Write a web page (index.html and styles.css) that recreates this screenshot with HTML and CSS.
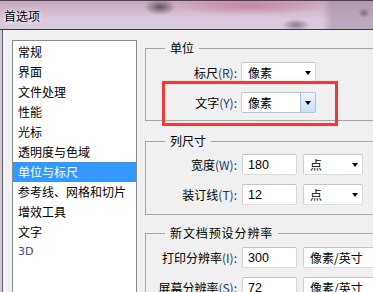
FILE: index.html
```html
<!DOCTYPE html>
<html lang="zh-CN">
<head>
<meta charset="utf-8">
<title>首选项</title>
<link rel="stylesheet" href="styles.css">
</head>
<body>
<div class="titlebar"><span class="title">首选项</span></div>
<div class="frame">
  <div class="client">
    <ul class="nav">
      <li>常规</li>
      <li>界面</li>
      <li>文件处理</li>
      <li>性能</li>
      <li>光标</li>
      <li>透明度与色域</li>
      <li class="sel">单位与标尺</li>
      <li>参考线、网格和切片</li>
      <li>增效工具</li>
      <li>文字</li>
      <li class="en">3D</li>
    </ul>
    <div class="panel">
      <fieldset class="grp g1">
        <legend>单位</legend>
        <div class="row">
          <label>标尺<span class="k">(R):</span></label>
          <div class="select"><span class="val">像素</span><i class="arrow"></i></div>
        </div>
        <div class="row">
          <label>文字<span class="k">(Y):</span></label>
          <div class="select focus"><span class="val">像素</span><span class="btn"><i class="arrow"></i></span></div>
        </div>
      </fieldset>
      <fieldset class="grp g2">
        <legend>列尺寸</legend>
        <div class="row">
          <label>宽度<span class="k">(W):</span></label>
          <div class="input num">180</div>
          <div class="select"><span class="val">点</span><i class="arrow"></i></div>
        </div>
        <div class="row">
          <label>装订线<span class="k">(T):</span></label>
          <div class="input num">12</div>
          <div class="select"><span class="val">点</span><i class="arrow"></i></div>
        </div>
      </fieldset>
      <fieldset class="grp g3">
        <legend>新文档预设分辨率</legend>
        <div class="row">
          <label>打印分辨率<span class="k">(I):</span></label>
          <div class="input num">300</div>
          <div class="select"><span class="val">像素/英寸</span></div>
        </div>
        <div class="row">
          <label>屏幕分辨率<span class="k">(S):</span></label>
          <div class="input num">72</div>
          <div class="select"><span class="val">像素/英寸</span></div>
        </div>
      </fieldset>
    </div>
  </div>
</div>
<div class="callout"></div>
</body>
</html>
```
FILE: styles.css
```css
html, body {
  margin: 0;
  padding: 0;
}
body {
  width: 373px;
  height: 292px;
  overflow: hidden;
  position: relative;
  background: #f0f0f0;
  font-family: "Noto Sans CJK SC", "Noto Sans", sans-serif;
  font-size: 12px;
  color: #000;
}

/* title bar (blurred aero glass) */
.titlebar {
  height: 28px;
  border-top: 1px solid #4a404a;
  border-bottom: 1px solid #3a3a3c;
  display: flex;
  align-items: center;
  padding-left: 4px;
  background:
    radial-gradient(ellipse 16px 8px at 160px 6px, rgba(70,60,72,.8), transparent),
    radial-gradient(ellipse 80px 9px at 250px 5px, rgba(196,112,142,.65), transparent),
    radial-gradient(ellipse 14px 6px at 296px 24px, rgba(100,86,102,.7), transparent),
    radial-gradient(ellipse 6px 5px at 364px 12px, rgba(90,80,92,.6), transparent),
    linear-gradient(to right, rgba(160,140,162,0) 0, rgba(160,140,162,0) 322px, rgba(160,140,162,.55) 332px),
    linear-gradient(#c7a7bc 0, #d3bccf 40%, #dacbdc 70%, #d9cadb 100%);
}
.title {
  font-size: 12px;
  line-height: 16px;
  margin-top: 1px;
  text-shadow: 0 0 5px rgba(255,255,255,.9), 0 0 2px rgba(255,255,255,.9);
}

/* window frame */
.frame {
  padding-left: 2px;
  background: #d6c7d6;
  height: 262px;
}
.client {
  height: 100%;
  border-left: 1px solid #5c5c60;
  background: #f0f0f0;
  display: flex;
  align-items: flex-start;
  padding: 10px 0 0 9px;
}

/* category list */
.nav {
  flex: none;
  list-style: none;
  margin: 0;
  padding: 1px 0 0;
  width: 123px;
  height: 300px;
  background: #fff;
  border: 1px solid #8a8a8e;
}
.nav li {
  height: 20px;
  line-height: 20px;
  padding-left: 5px;
  white-space: nowrap;
}
.nav li.sel {
  background: #3399ff;
  color: #fff;
}
.nav li.en {
  color: #3a4699;
  font-family: "DejaVu Sans", sans-serif;
  font-size: 11px;
}

/* right panel */
.panel {
  flex: none;
  width: 240px;
  margin-left: 8px;
}
.grp {
  margin: 0;
  border: 1px solid #a5a5a5;
  min-width: 0;
}
.grp legend {
  margin-left: 19px;
  padding: 0 5px;
  line-height: 16px;
  font-size: 12px;
}
.g3 legend {
  letter-spacing: 0.9px;
}
.g1 { padding: 6px 0 7px; }
.g2 { padding: 5px 0 9px; margin-top: 12px; }
.g3 { padding: 6px 0 9px; margin-top: 10px; }

.row {
  display: grid;
  align-items: center;
  column-gap: 5px;
  height: 21px;
}
.row + .row { margin-top: 9px; }
.g1 .row { grid-template-columns: 91px 75px; column-gap: 4px; }
.g2 .row { grid-template-columns: 91px 55px 61px; }
.g3 .row { grid-template-columns: 91px 55px 80px; }
.g2 .row, .g3 .row { column-gap: 5px; }
.g2 .row .select, .g3 .row .select { margin-left: 1px; }

.row label {
  text-align: right;
  white-space: nowrap;
}
.k { color: #1c3668; }

.select, .input {
  box-sizing: border-box;
  height: 21px;
  background: #fff;
  border: 1px solid;
  border-color: #c4c4c4 #d6d6d6 #dedede #cfcfcf;
  border-radius: 2px;
  display: flex;
  align-items: center;
  padding-left: 6px;
  white-space: nowrap;
  overflow: hidden;
}
.val { flex: 1; }
.select .arrow {
  width: 0;
  height: 0;
  border-left: 3.5px solid transparent;
  border-right: 3.5px solid transparent;
  border-top: 4px solid #000;
  margin-right: 4px;
}
.select.focus {
  border-color: #b9c9d9 #a9c2dc #aec6de #c4d0dc;
}
.select.focus .btn {
  align-self: stretch;
  width: 14px;
  border-left: 1px solid #a7c4e0;
  background: linear-gradient(#eef6fd, #d8e9f8 50%, #c9e1f6);
  display: flex;
  align-items: center;
  justify-content: center;
}
.select.focus .btn .arrow { margin-right: 0; }
.num {
  font-family: "Liberation Sans", Arial, sans-serif;
  font-size: 12.5px;
  padding-left: 5px;
}

/* red annotation frame */
.callout {
  position: absolute;
  left: 162px;
  top: 81px;
  width: 176px;
  height: 45px;
  box-sizing: border-box;
  border: 3px solid #f03a3a;
}
```
